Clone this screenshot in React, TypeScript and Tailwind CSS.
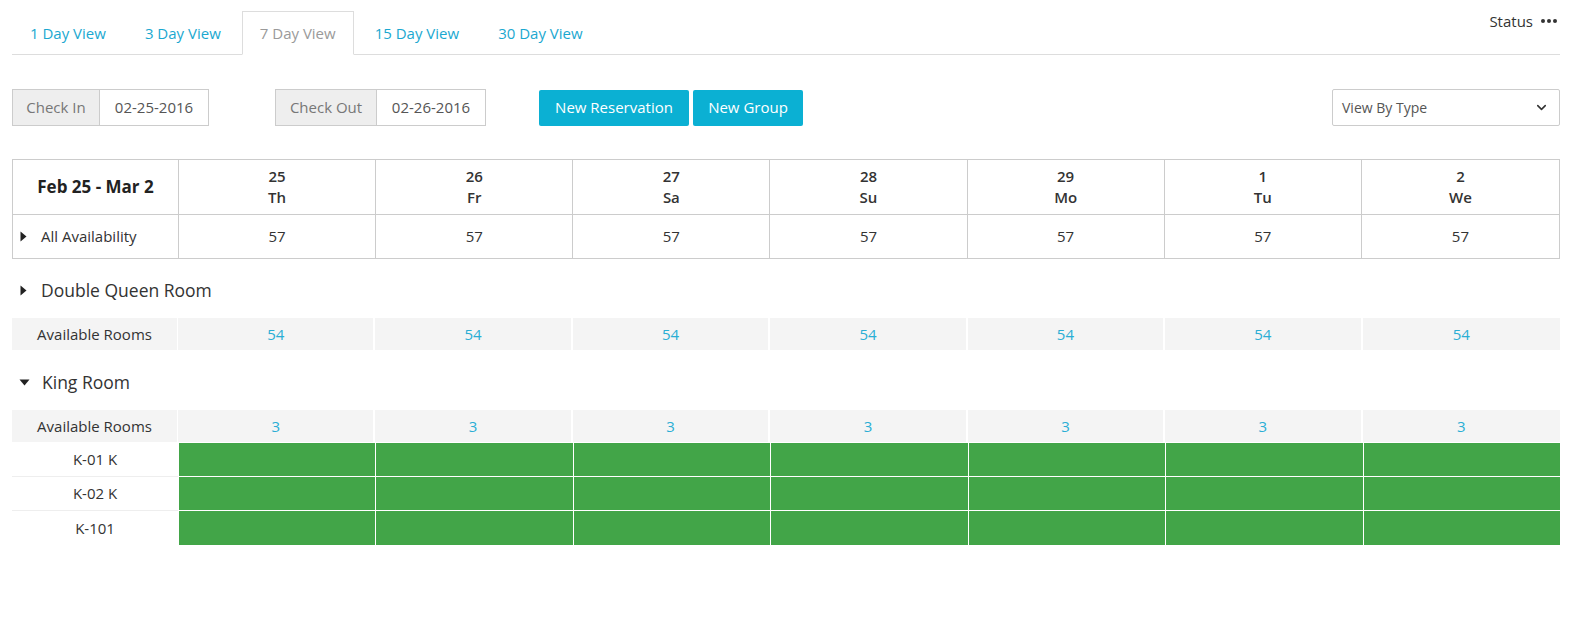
import React from "react";
import { ChevronDown } from "lucide-react";

const days = [
  { d: "25", w: "Th" },
  { d: "26", w: "Fr" },
  { d: "27", w: "Sa" },
  { d: "28", w: "Su" },
  { d: "29", w: "Mo" },
  { d: "1", w: "Tu" },
  { d: "2", w: "We" },
];

function TriRight() {
  return (
    <svg width="7" height="11" viewBox="0 0 7 11" className="shrink-0">
      <path d="M0.5 0.5 L6.5 5.5 L0.5 10.5 Z" fill="#222" />
    </svg>
  );
}
function TriDown() {
  return (
    <svg width="11" height="7" viewBox="0 0 11 7" className="shrink-0">
      <path d="M0.5 0.5 L10.5 0.5 L5.5 6.5 Z" fill="#222" />
    </svg>
  );
}

const grid = "grid grid-cols-[166px_repeat(7,minmax(0,1fr))]";

function AvailRow({ n }: { n: string }) {
  return (
    <div className={`${grid} h-[32px] bg-[#f4f4f4] text-[15px]`}>
      <div className="flex items-center justify-center text-[#333] border-r border-white">Available Rooms</div>
      {days.map((_, i) => (
        <div
          key={i}
          className={`flex items-center justify-center text-[#2aaed4] ${i < 6 ? "border-r-2 border-white" : ""}`}
        >
          {n}
        </div>
      ))}
    </div>
  );
}

function RoomRow({ name, last }: { name: string; last?: boolean }) {
  return (
    <div className={`${grid} h-[34px] text-[15px]`}>
      <div className={`flex items-center justify-center text-[#333] ${last ? "" : "border-b border-[#eee]"}`}>{name}</div>
      {days.map((_, i) => (
        <div key={i} className={`bg-[#42a548] border-l border-white ${last ? "" : "border-b"}`} />
      ))}
    </div>
  );
}

export default function App() {
  const tabs = ["1 Day View", "3 Day View", "7 Day View", "15 Day View", "30 Day View"];
  return (
    <div
      className="bg-white min-h-[619px] pl-[12px] pr-[15px] text-[#333]"
      style={{ fontFamily: '"Open Sans", "Noto Sans", sans-serif' }}
    >
      {/* Tabs */}
      <div className="flex items-start pt-[11px] border-b border-[#ddd]">
        <div className="flex items-end">
          {tabs.map((t) => {
            const active = t === "7 Day View";
            return (
              <div
                key={t}
                className={`px-[17px] py-[10px] leading-[22px] text-[15px] mr-[3px] -mb-px border ${
                  active
                    ? "border-[#ddd] border-b-white bg-white text-[#9a9a9a]"
                    : "border-transparent text-[#1ba8d0]"
                }`}
              >
                {t}
              </div>
            );
          })}
        </div>
        <div className="ml-auto flex items-center gap-[8px] h-[20px] text-[15px] text-[#333] pr-[3px]">
          <span>Status</span>
          <span className="flex gap-[2px] items-center">
            <span className="w-[4px] h-[4px] rounded-full bg-[#333]" />
            <span className="w-[4px] h-[4px] rounded-full bg-[#333]" />
            <span className="w-[4px] h-[4px] rounded-full bg-[#333]" />
          </span>
        </div>
      </div>

      {/* Controls */}
      <div className="flex items-center mt-[34px] h-[37px]">
        <div className="flex h-[37px] text-[15px]">
          <div className="w-[88px] flex items-center justify-center bg-[#eee] border border-[#ccc] text-[#777]">
            Check In
          </div>
          <div className="w-[109px] flex items-center justify-center border border-l-0 border-[#ccc] text-[#555]">
            02-25-2016
          </div>
        </div>
        <div className="flex h-[37px] text-[15px] ml-[66px]">
          <div className="w-[102px] flex items-center justify-center bg-[#eee] border border-[#ccc] text-[#777]">
            Check Out
          </div>
          <div className="w-[109px] flex items-center justify-center border border-l-0 border-[#ccc] text-[#555]">
            02-26-2016
          </div>
        </div>
        <div className="flex gap-[4px] ml-[53px]">
          <button className="h-[36px] w-[150px] bg-[#0bb0d3] text-white text-[15px] font-medium rounded-[2px]">
            New Reservation
          </button>
          <button className="h-[36px] w-[110px] bg-[#0bb0d3] text-white text-[15px] font-medium rounded-[2px]">
            New Group
          </button>
        </div>
        <div className="ml-auto w-[228px] h-[37px] border border-[#ccc] rounded-[2px] flex items-center justify-between pl-[9px] pr-[10px] text-[14px] text-[#555]">
          <span>View By Type</span>
          <ChevronDown size={15} strokeWidth={2.5} color="#333" />
        </div>
      </div>

      {/* Summary table */}
      <div className="mt-[33px] border border-[#ccc]">
        <div className={`${grid} h-[55px] border-b border-[#ccc]`}>
          <div className="flex items-center justify-center text-[17px] font-bold text-[#222] border-r border-[#ccc]">
            Feb 25 - Mar 2
          </div>
          {days.map((d, i) => (
            <div
              key={i}
              className={`flex flex-col items-center justify-center text-[15px] leading-[21px] font-semibold text-[#333] ${
                i < 6 ? "border-r border-[#ccc]" : ""
              }`}
            >
              <span>{d.d}</span>
              <span>{d.w}</span>
            </div>
          ))}
        </div>
        <div className={`${grid} h-[43px]`}>
          <div className="flex items-center gap-[14px] pl-[7px] text-[15px] text-[#333] border-r border-[#ccc]">
            <TriRight />
            <span>All Availability</span>
          </div>
          {days.map((_, i) => (
            <div
              key={i}
              className={`flex items-center justify-center text-[15px] text-[#333] ${i < 6 ? "border-r border-[#ccc]" : ""}`}
            >
              57
            </div>
          ))}
        </div>
      </div>

      {/* Double Queen */}
      <div className="flex items-center gap-[14px] pl-[8px] mt-[19px] mb-[16px] h-[24px] text-[17.5px] text-[#333]">
        <TriRight />
        <span>Double Queen Room</span>
      </div>
      <AvailRow n="54" />

      {/* King */}
      <div className="flex items-center gap-[12px] pl-[7px] mt-[20px] mb-[16px] h-[24px] text-[17.5px] text-[#333]">
        <TriDown />
        <span>King Room</span>
      </div>
      <AvailRow n="3" />
      <div className="border-t border-white">
        <RoomRow name="K-01 K" />
        <RoomRow name="K-02 K" />
        <RoomRow name="K-101" last />
      </div>
    </div>
  );
}
